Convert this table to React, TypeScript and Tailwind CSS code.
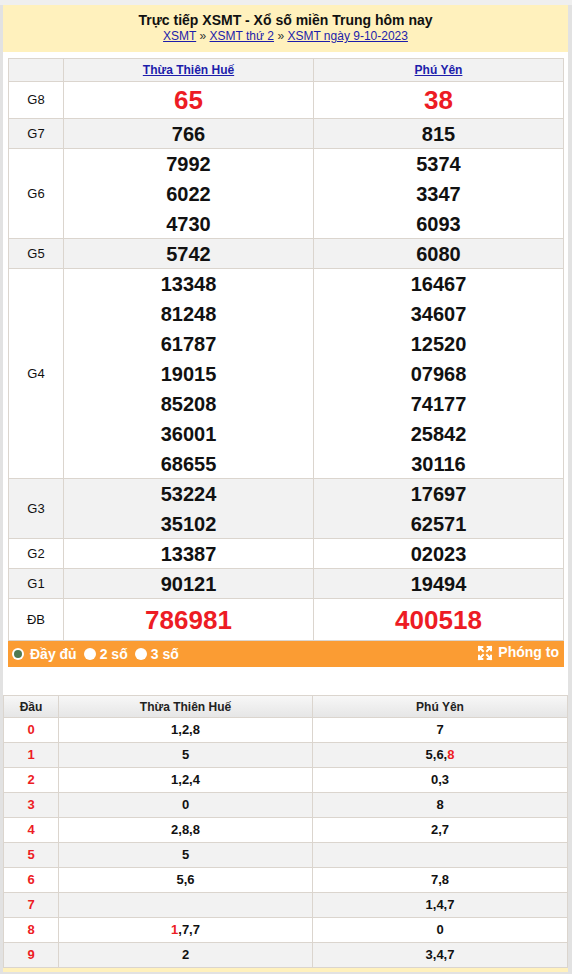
const prizes = [
  { label: "G8", h: "h-[36px]", big: true, a: ["65"], b: ["38"] },
  { label: "G7", h: "h-[29px]", a: ["766"], b: ["815"] },
  { label: "G6", h: "h-[89px]", a: ["7992", "6022", "4730"], b: ["5374", "3347", "6093"] },
  { label: "G5", h: "h-[29px]", a: ["5742"], b: ["6080"] },
  {
    label: "G4",
    h: "h-[209px]",
    a: ["13348", "81248", "61787", "19015", "85208", "36001", "68655"],
    b: ["16467", "34607", "12520", "07968", "74177", "25842", "30116"],
  },
  { label: "G3", h: "h-[59px]", a: ["53224", "35102"], b: ["17697", "62571"] },
  { label: "G2", h: "h-[29px]", a: ["13387"], b: ["02023"] },
  { label: "G1", h: "h-[29px]", a: ["90121"], b: ["19494"] },
  { label: "ĐB", h: "h-[41px]", big: true, a: ["786981"], b: ["400518"] },
];

// "!" marks a digit shown in red
const loto = [
  { d: "0", a: ["1", "2", "8"], b: ["7"] },
  { d: "1", a: ["5"], b: ["5", "6", "!8"] },
  { d: "2", a: ["1", "2", "4"], b: ["0", "3"] },
  { d: "3", a: ["0"], b: ["8"] },
  { d: "4", a: ["2", "8", "8"], b: ["2", "7"] },
  { d: "5", a: ["5"], b: [] },
  { d: "6", a: ["5", "6"], b: ["7", "8"] },
  { d: "7", a: [], b: ["1", "4", "7"] },
  { d: "8", a: ["!1", "7", "7"], b: ["0"] },
  { d: "9", a: ["2"], b: ["3", "4", "7"] },
];

function Nums({ list, big }: { list: string[]; big?: boolean }) {
  return (
    <div className="flex flex-col items-center justify-center">
      {list.map((n, i) =>
        big ? (
          <div key={i} className="text-[26px] leading-[30px] font-bold text-[#ed1c24]">
            {n}
          </div>
        ) : (
          <div key={i} className="text-[20px] leading-[30px] font-bold text-[#111]">
            {n}
          </div>
        )
      )}
    </div>
  );
}

function Digits({ list }: { list: string[] }) {
  return (
    <span>
      {list.map((x, i) => (
        <span key={i}>
          {i > 0 && ","}
          {x.startsWith("!") ? <span className="text-[#ed1c24]">{x.slice(1)}</span> : x}
        </span>
      ))}
    </span>
  );
}

function Radio({ on }: { on?: boolean }) {
  return on ? (
    <span className="flex shrink-0 w-[12px] h-[12px] rounded-full bg-white items-center justify-center">
      <span className="block w-[8px] h-[8px] rounded-full bg-[#4f7a52]"></span>
    </span>
  ) : (
    <span className="block shrink-0 w-[12px] h-[12px] rounded-full bg-white"></span>
  );
}

export default function App() {
  return (
    <div className="w-[572px] h-[974px] bg-[#e2e2e2] font-['Liberation_Sans',Arial,sans-serif] overflow-hidden">
      <div className="h-[5px] bg-[#efefef]"></div>
      <div className="ml-[3px] mr-[4px] bg-[#fff1bd] pb-[4px]">
        {/* Header */}
        <div className="h-[47px] pt-[7px] text-center">
          <h1 className="text-[14px] leading-[17px] font-bold text-[#111]">
            Trực tiếp XSMT - Xổ số miền Trung hôm nay
          </h1>
          <div className="text-[12px] leading-[15px] text-[#333]">
            <a href="#" className="text-[#1d1dab] underline">XSMT</a> »{" "}
            <a href="#" className="text-[#1d1dab] underline">XSMT thứ 2</a> »{" "}
            <a href="#" className="text-[#1d1dab] underline">XSMT ngày 9-10-2023</a>
          </div>
        </div>

        <div className="bg-white">
          {/* Results */}
          <div className="pt-[6px] pl-[5px] pr-[4px]">
            <div className="border border-[#dbd5ce] border-b-0">
              <div className="flex h-[23px] bg-[#f2f2f2] border-b border-[#dbd5ce] text-[12px] font-bold">
                <div className="w-[55px] border-r border-[#dbd5ce]"></div>
                <div className="w-[250px] border-r border-[#dbd5ce] flex items-center justify-center">
                  <a href="#" className="text-[#1d1dab] underline">Thừa Thiên Huế</a>
                </div>
                <div className="flex-1 flex items-center justify-center">
                  <a href="#" className="text-[#1d1dab] underline">Phú Yên</a>
                </div>
              </div>
              {prizes.map((p, i) => (
                <div
                  key={p.label}
                  className={`flex box-content ${p.h} border-b border-[#dbd5ce] ${i % 2 === 1 ? "bg-[#f2f2f2]" : "bg-white"}`}
                >
                  <div className="w-[55px] border-r border-[#dbd5ce] flex items-center justify-center text-[13px] text-[#111]">
                    {p.label}
                  </div>
                  <div className="w-[250px] border-r border-[#dbd5ce] flex items-center justify-center">
                    <Nums list={p.a} big={p.big} />
                  </div>
                  <div className="flex-1 flex items-center justify-center">
                    <Nums list={p.b} big={p.big} />
                  </div>
                </div>
              ))}
            </div>
            <div className="h-[26px] bg-[#fb9c33] flex items-center justify-between pl-[4px] pr-[5px] text-[14px] font-bold text-white">
              <div className="flex items-center">
                <Radio on />
                <span className="ml-[6px]">Đầy đủ</span>
                <span className="ml-[7px]"><Radio /></span>
                <span className="ml-[4px]">2 số</span>
                <span className="ml-[7px]"><Radio /></span>
                <span className="ml-[4px]">3 số</span>
              </div>
              <div className="flex items-center -mt-[3px]">
                <svg width="16" height="16" viewBox="0 0 24 24" fill="none" stroke="white" strokeWidth="3" strokeLinecap="square">
                  <path d="M15 15l6 6M15 9l6-6M21 16v5h-5M21 8V3h-5M3 16v5h5M3 21l6-6M3 8V3h5M9 9L3 3" />
                </svg>
                <span className="ml-[5px]">Phóng to</span>
              </div>
            </div>
          </div>

          {/* Loto table */}
          <div className="mt-[28px] border border-[#dbd5ce] border-b-0">
            <div className="flex h-[22px] border-b border-[#dbd5ce] bg-gradient-to-b from-[#f7f7f7] to-[#e6e6e6] text-[12px] font-bold text-[#222]">
              <div className="w-[55px] border-r border-[#dbd5ce] flex items-center justify-center">Đầu</div>
              <div className="w-[254px] border-r border-[#dbd5ce] flex items-center justify-center">Thừa Thiên Huế</div>
              <div className="flex-1 flex items-center justify-center">Phú Yên</div>
            </div>
            {loto.map((r, i) => (
              <div
                key={r.d}
                className={`flex h-[25px] border-b border-[#dbd5ce] text-[13px] font-bold text-[#111] ${i % 2 === 1 ? "bg-[#f2f2f2]" : "bg-white"}`}
              >
                <div className="w-[55px] border-r border-[#dbd5ce] flex items-center justify-center text-[#ed1c24]">
                  {r.d}
                </div>
                <div className="w-[254px] border-r border-[#dbd5ce] flex items-center justify-center">
                  <Digits list={r.a} />
                </div>
                <div className="flex-1 flex items-center justify-center">
                  <Digits list={r.b} />
                </div>
              </div>
            ))}
          </div>
        </div>
      </div>
    </div>
  );
}
